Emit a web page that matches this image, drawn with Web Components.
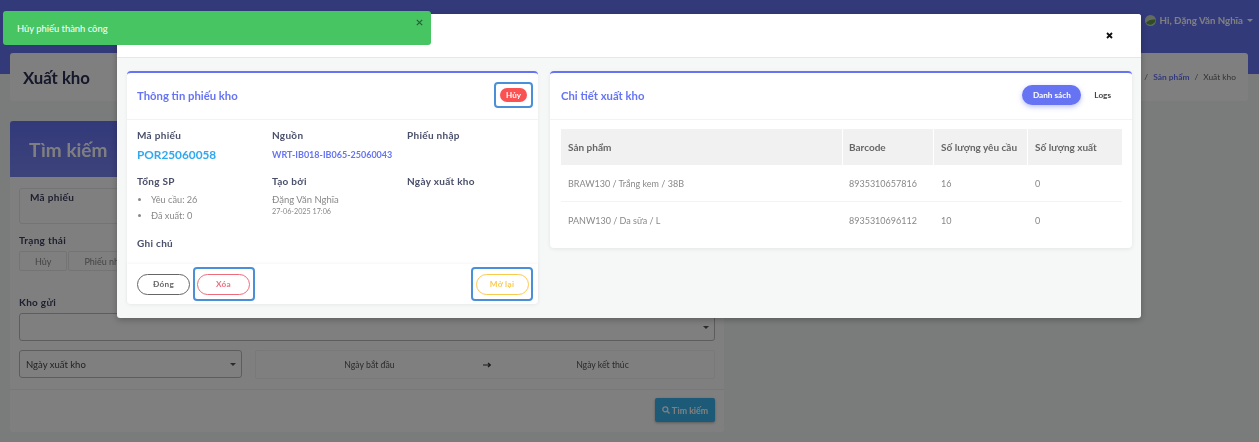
<!DOCTYPE html>
<html lang="vi">
<head>
<meta charset="utf-8">
<title>Xuất kho</title>
<style>
  html, body { margin: 0; height: 100%; overflow: hidden; }
  body { background: #f4f6f6; font-family: Lato, 'Open Sans', sans-serif; filter: blur(.3px); }
</style>
</head>
<body>
<top-bar>Hi, Đặng Văn Nghĩa</top-bar>
<page-title heading="Xuất kho"></page-title>
<search-panel></search-panel>
<ticket-modal></ticket-modal>
<toast-alert>Hủy phiếu thành công</toast-alert>

<script>
class TopBar extends HTMLElement {
    connectedCallback() {
        this.attachShadow({ mode: 'open' });
        this.shadowRoot.innerHTML = `
            <style>
                :host { display: flex; justify-content: flex-end; align-items: flex-start; height: 74px; background: #6674f4; color: #fff; box-sizing: border-box; padding: 13px 6px 0 0; font-size: 9.7px; font-weight: 700; }
                .wrap { display: flex; align-items: center; gap: 4px; height: 14px; }
                .bell { margin-right: 19px; }
                .caret { width: 0; height: 0; border: 3px solid transparent; border-top-color: #fff; border-bottom: 0; }
            </style>
            <div class="wrap">
                <svg class="bell" width="11" height="12" viewBox="0 0 11 12"><path d="M5.5 0a1 1 0 0 1 1 1c2 .4 2.8 2 2.8 4 0 2 .7 3 1.2 3.5v.8H.5v-.8C1 8 1.700 7 1.700 5c0-2 .8-3.600 2.800-4a1 1 0 0 1 1-1z" fill="#fff"/></svg>
                <svg width="11" height="11" viewBox="0 0 11 11"><circle cx="5.5" cy="5.5" r="5.5" fill="#c9d8c4"/><path d="M1 8c2-3 6-4 9.500-3.500A5.500 5.500 0 0 1 1 8z" fill="#5e9a44"/></svg>
                <span><slot></slot></span>
                <span class="caret"></span>
            </div>`;
    }
}

class PageTitle extends HTMLElement {
    connectedCallback() {
        this.attachShadow({ mode: 'open' });
        this.shadowRoot.innerHTML = `
            <style>
                :host { display: flex; justify-content: space-between; align-items: center; height: 48px; margin: -21px 11px 0 10px; padding: 0 12px 0 13px; background: #fff; border-radius: 3px; box-sizing: border-box; }
                h1 { margin: 0; font-size: 16.8px; font-weight: 700; color: #2b2f55; }
                nav { font-size: 8.4px; color: #666; display: flex; gap: 5px; }
                a { color: #6674f4; font-weight: 700; }
            </style>
            <h1>${this.getAttribute('heading')}</h1>
            <nav><a>Kho hàng</a><span>/</span><a>Sản phẩm</a><span>/</span><span>Xuất kho</span></nav>`;
    }
}

class SearchPanel extends HTMLElement {
    connectedCallback() {
        this.attachShadow({ mode: 'open' });
        this.shadowRoot.innerHTML = `
            <style>
                :host { display: block; width: 714px; height: 311px; margin: 20px 0 0 10px; background: #fff; border-radius: 3px; color: #333; font-size: 10px; }
                .head { height: 56px; box-sizing: border-box; padding: 0 19px; display: flex; align-items: center; background: linear-gradient(#6674f4, #7a86f5); color: #fff; border-radius: 3px 3px 0 0; font-size: 19px; font-weight: 700; }
                .body { height: 213px; box-sizing: border-box; padding: 11px 9px 0; display: flex; flex-direction: column; border-bottom: 1px solid #f0f0f0; }
                .code { height: 36px; border: 1px solid #e8e8e8; border-radius: 3px; box-sizing: border-box; padding: 2px 10px; font-weight: 700; font-size: 10px; letter-spacing: .3px; color: #3d4060; }
                label { display: block; font-size: 10px; font-weight: 700; letter-spacing: .3px; color: #3d4060; }
                .status { margin-top: 10px; }
                .chips { display: flex; gap: 1px; margin-top: 5px; }
                .chips span { height: 20px; line-height: 20px; padding: 0 15px; border: 1px solid #e8e8e8; border-radius: 2px; box-sizing: border-box; color: #888; font-size: 9px; }
                .kho { margin-top: 25px; }
                .select { position: relative; height: 28px; margin-top: 5px; border: 1px solid #bbb; border-radius: 3px; box-sizing: border-box; display: flex; align-items: center; padding: 0 6px; font-size: 9.5px; color: #444; }
                .select::after { content: ''; position: absolute; right: 5px; top: 12px; border: 3px solid transparent; border-top-color: #555; border-bottom: 0; }
                .dates { display: flex; gap: 13px; margin-top: 9px; }
                .dates .select { width: 223px; margin: 0; }
                .range { flex: 1; height: 29px; border: 1px solid #f3f3f3; border-radius: 2px; box-sizing: border-box; display: grid; grid-template-columns: 227px 8px 1fr; align-items: center; text-align: center; color: #555; font-size: 8.7px; }
                .range svg { display: block; }
                .foot { height: 42px; display: flex; justify-content: flex-end; align-items: center; padding-right: 9px; }
                button { display: flex; align-items: center; gap: 2px; width: 60px; height: 24px; justify-content: center; margin-top: -2px; border: 0; border-radius: 2px; background: #3ab4ee; color: #fff; font: 700 8.8px Lato, sans-serif; box-shadow: 0 1px 3px rgba(0,0,0,.3); padding: 0; }
            </style>
            <div class="head">Tìm kiếm</div>
            <div class="body">
                <div class="code">Mã phiếu</div>
                <div class="status">
                    <label>Trạng thái</label>
                    <div class="chips"><span>Hủy</span><span>Phiếu nháp</span></div>
                </div>
                <label class="kho">Kho gửi</label>
                <div class="select"></div>
                <div class="dates">
                    <div class="select">Ngày xuất kho</div>
                    <div class="range"><span>Ngày bắt đầu</span><svg width="8" height="6" viewBox="0 0 8 6"><path d="M0 3h6.500M5 1l2.500 2L5 5" fill="none" stroke="#333" stroke-width="1.200"/></svg><span>Ngày kết thúc</span></div>
                </div>
            </div>
            <div class="foot">
                <button><svg width="8" height="8" viewBox="0 0 8 8"><circle cx="3.300" cy="3.300" r="2.500" fill="none" stroke="#fff" stroke-width="1.300"/><path d="M5 5l2.500 2.500" stroke="#fff" stroke-width="1.400"/></svg>Tìm kiếm</button>
            </div>`;
    }
}

class PillButton extends HTMLElement {
    connectedCallback() {
        const color = this.getAttribute('color');
        this.attachShadow({ mode: 'open' });
        this.shadowRoot.innerHTML = `
            <style>
                :host { display: block; width: 53px; height: 21px; box-sizing: border-box; border: 1px solid ${color}; border-radius: 11px; text-align: center; line-height: 19px; font-size: 8.2px; font-weight: 700; letter-spacing: .3px; color: ${color}; }
            </style>
            <slot></slot>`;
    }
}

class MarkBox extends HTMLElement {
    connectedCallback() {
        this.attachShadow({ mode: 'open' });
        this.shadowRoot.innerHTML = `
            <style>
                :host { display: flex; border: 2px solid #4a90d9; border-radius: 4px; padding: var(--pad, 4.5px 2.5px); }
            </style>
            <slot></slot>`;
    }
}

class InfoField extends HTMLElement {
    connectedCallback() {
        this.attachShadow({ mode: 'open' });
        this.shadowRoot.innerHTML = `
            <style>
                :host { display: block; }
                .label { font-size: 10px; line-height: 16px; font-weight: 700; letter-spacing: .3px; color: #4a4f6a; }
            </style>
            <div class="label">${this.getAttribute('label')}</div>
            <slot></slot>`;
    }
}

class InfoCard extends HTMLElement {
    connectedCallback() {
        this.attachShadow({ mode: 'open' });
        this.shadowRoot.innerHTML = `
            <style>
                :host { display: block; height: 233px; background: #fff; border-top: 2px solid #6674f4; border-radius: 4px; box-sizing: border-box; box-shadow: 0 1px 4px rgba(0,0,0,.06); }
                header { display: flex; justify-content: space-between; align-items: center; height: 47px; box-sizing: border-box; padding: 0 5px 2px 10px; border-bottom: 1px solid #f3f3f3; }
                h2 { margin: 0; font-size: 11.3px; font-weight: 700; color: #6674f4; }
                .badge { display: block; width: 27px; background: #fa5252; color: #fff; font-size: 8px; font-weight: 700; line-height: 14px; text-align: center; border-radius: 7px; }
                .grid { display: grid; grid-template-columns: 135px 135px 1fr; row-gap: 10px; height: 144px; box-sizing: border-box; padding: 7px 10px 0; align-content: start; }
                .grid .note { grid-column: 1 / -1; margin-top: 1px; }
                .code { margin-top: 4px; font-size: 11.8px; line-height: 16px; font-weight: 700; color: #2fa8ef; }
                .link { margin-top: 4px; font-size: 9px; line-height: 16px; font-weight: 700; color: #6674f4; white-space: nowrap; }
                ul { margin: 3px 0 0; padding-left: 14px; font-size: 9.2px; line-height: 16px; color: #888; }
                .name { margin-top: 3px; font-size: 9.5px; line-height: 16px; color: #888; }
                .date { font-size: 7.2px; line-height: 8px; color: #888; }
                footer { display: flex; align-items: center; gap: 2.5px; height: 40px; padding: 0 5px 0 10px; box-shadow: 0 -1px 3px rgba(0,0,0,.04); }
                .push { margin-left: auto; }
            </style>
            <header>
                <h2>Thông tin phiếu kho</h2>
                <mark-box style="--pad:4px"><span class="badge">Hủy</span></mark-box>
            </header>
            <div class="grid">
                <info-field label="Mã phiếu"><div class="code">POR25060058</div></info-field>
                <info-field label="Nguồn"><div class="link">WRT-IB018-IB065-25060043</div></info-field>
                <info-field label="Phiếu nhập"></info-field>
                <info-field label="Tổng SP"><ul><li>Yêu cầu: 26</li><li>Đã xuất: 0</li></ul></info-field>
                <info-field label="Tạo bởi"><div class="name">Đặng Văn Nghĩa</div><div class="date">27-06-2025 17:06</div></info-field>
                <info-field label="Ngày xuất kho"></info-field>
                <info-field class="note" label="Ghi chú"></info-field>
            </div>
            <footer>
                <pill-button color="#666">Đóng</pill-button>
                <mark-box><pill-button color="#ee6b7a">Xóa</pill-button></mark-box>
                <mark-box class="push"><pill-button color="#fcc94f">Mở lại</pill-button></mark-box>
            </footer>`;
    }
}

class DetailCard extends HTMLElement {
    connectedCallback() {
        const rows = [
            ['BRAW130 / Trắng kem / 38B', '8935310657816', '16', '0'],
            ['PANW130 / Da sữa / L', '8935310696112', '10', '0']
        ];
        this.attachShadow({ mode: 'open' });
        this.shadowRoot.innerHTML = `
            <style>
                :host { display: block; height: 177px; background: #fff; border-top: 2px solid #6674f4; border-radius: 4px; box-sizing: border-box; box-shadow: 0 1px 4px rgba(0,0,0,.08); }
                header { display: flex; align-items: center; height: 47px; box-sizing: border-box; padding: 0 21px 2px 11px; border-bottom: 1px solid #f3f3f3; }
                h2 { margin: 0; font-size: 11.3px; font-weight: 700; color: #6674f4; flex: 1; }
                .tab { font-size: 8.2px; font-weight: 700; color: #444; }
                .tab.on { width: 59px; height: 20px; line-height: 20px; text-align: center; border-radius: 10px; background: #6674f4; color: #fff; margin-right: 13px; box-shadow: 0 2px 5px rgba(102,116,244,.45); }
                .wrap { padding: 9px 10px 0 11px; }
                .row { display: grid; grid-template-columns: 282px 91px 94px 1fr; height: 37px; box-sizing: border-box; align-items: center; font-size: 9px; color: #888; border-bottom: 1px solid #f3f3f3; }
                .row:last-child { border-bottom: 0; }
                .row span { padding-left: 7px; align-self: stretch; display: flex; align-items: center; }
                .row span:nth-child(2) { padding-left: 6px; }
                .row.head { height: 36px; background: #f1f1f1; border: 0; font-size: 10px; font-weight: 700; color: #666; }
                .row.head span { border-right: 1px solid #fff; }
                .row.head span:last-child { border-right: 0; }
            </style>
            <header>
                <h2>Chi tiết xuất kho</h2>
                <span class="tab on">Danh sách</span>
                <span class="tab">Logs</span>
            </header>
            <div class="wrap">
                <div class="row head"><span>Sản phẩm</span><span>Barcode</span><span>Số lượng yêu cầu</span><span>Số lượng xuất</span></div>
                ${rows.map(r => `<div class="row">${r.map(c => `<span>${c}</span>`).join('')}</div>`).join('')}
            </div>`;
    }
}

class TicketModal extends HTMLElement {
    connectedCallback() {
        this.attachShadow({ mode: 'open' });
        this.shadowRoot.innerHTML = `
            <style>
                :host { position: fixed; inset: 0; background: rgba(0,0,0,.5); }
                .modal { width: 1024px; height: 304px; margin: 14px 0 0 117px; background: #f6f8f8; border-radius: 3px; box-shadow: 0 2px 6px rgba(0,0,0,.25); }
                .top { height: 43px; background: #fff; border-bottom: 1px solid #e6e8e8; border-radius: 3px 3px 0 0; display: flex; justify-content: flex-end; align-items: center; padding: 0 28px; box-sizing: content-box; }
                .body { display: grid; grid-template-columns: 411px 582px; gap: 12px; align-items: start; padding: 13px 10px 0; }
            </style>
            <div class="modal">
                <div class="top"><svg width="7" height="7" viewBox="0 0 7 7"><path d="M1 1l5 5M6 1L1 6" stroke="#111" stroke-width="1.800"/></svg></div>
                <div class="body"><info-card></info-card><detail-card></detail-card></div>
            </div>`;
    }
}

class ToastAlert extends HTMLElement {
    connectedCallback() {
        this.attachShadow({ mode: 'open' });
        this.shadowRoot.innerHTML = `
            <style>
                :host { position: fixed; left: 3px; top: 11px; width: 428px; height: 34px; box-sizing: border-box; background: #47c563; border-radius: 3px; color: #fff; font-size: 9.4px; display: flex; align-items: center; justify-content: space-between; padding: 0 8px 0 14px; }
                svg { align-self: flex-start; margin-top: 8px; }
            </style>
            <span><slot></slot></span>
            <svg width="7" height="7" viewBox="0 0 7 7"><path d="M.8.8l5.400 5.400M6.200.8L.8 6.200" stroke="#2d5a3a" stroke-width="1.200"/></svg>`;
    }
}

customElements.define('top-bar', TopBar);
customElements.define('page-title', PageTitle);
customElements.define('search-panel', SearchPanel);
customElements.define('pill-button', PillButton);
customElements.define('mark-box', MarkBox);
customElements.define('info-field', InfoField);
customElements.define('info-card', InfoCard);
customElements.define('detail-card', DetailCard);
customElements.define('ticket-modal', TicketModal);
customElements.define('toast-alert', ToastAlert);
</script>
</body>
</html>
